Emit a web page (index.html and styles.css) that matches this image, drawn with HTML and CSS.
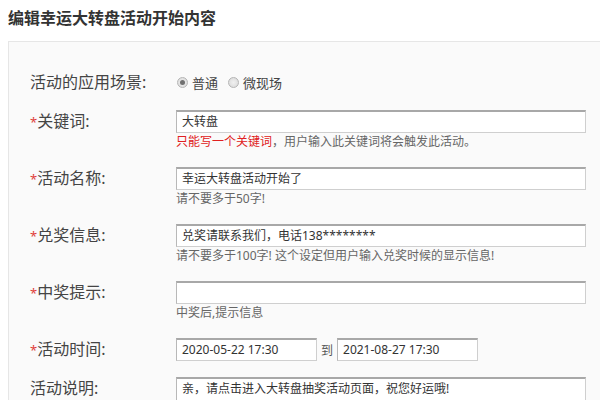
FILE: index.html
```html
<!DOCTYPE html>
<html lang="zh">
<head>
<meta charset="utf-8">
<title>编辑幸运大转盘活动开始内容</title>
<link rel="stylesheet" href="styles.css">
</head>
<body>
<h1 class="title">编辑幸运大转盘活动开始内容</h1>
<div class="panel">
  <div class="row">
    <div class="label">活动的应用场景:</div>
    <div class="field">
      <div class="radios">
        <span class="radio checked"></span><span class="radio-text">普通</span>
        <span class="radio"></span><span class="radio-text">微现场</span>
      </div>
    </div>
  </div>
  <div class="row">
    <div class="label"><span class="req">*</span>关键词:</div>
    <div class="field">
      <div class="input">大转盘</div>
      <div class="hint"><span class="warn">只能写一个关键词</span>，用户输入此关键词将会触发此活动。</div>
    </div>
  </div>
  <div class="row">
    <div class="label"><span class="req">*</span>活动名称:</div>
    <div class="field">
      <div class="input">幸运大转盘活动开始了</div>
      <div class="hint">请不要多于50字!</div>
    </div>
  </div>
  <div class="row">
    <div class="label"><span class="req">*</span>兑奖信息:</div>
    <div class="field">
      <div class="input">兑奖请联系我们，电话138********</div>
      <div class="hint">请不要多于100字! 这个设定但用户输入兑奖时候的显示信息!</div>
    </div>
  </div>
  <div class="row">
    <div class="label"><span class="req">*</span>中奖提示:</div>
    <div class="field">
      <div class="input"></div>
      <div class="hint">中奖后,提示信息</div>
    </div>
  </div>
  <div class="row">
    <div class="label"><span class="req">*</span>活动时间:</div>
    <div class="field">
      <div class="dates">
        <div class="input date">2020-05-22 17:30</div>
        <span class="to">到</span>
        <div class="input date">2021-08-27 17:30</div>
      </div>
    </div>
  </div>
  <div class="row last">
    <div class="label">活动说明:</div>
    <div class="field">
      <div class="input tall">亲，请点击进入大转盘抽奖活动页面，祝您好运哦!</div>
    </div>
  </div>
</div>
</body>
</html>
```

FILE: styles.css
```css
html, body {
  margin: 0;
  padding: 0;
  background: #fff;
  overflow: hidden;
  width: 600px;
  height: 400px;
}
body {
  font-family: "Noto Sans", "Noto Sans CJK SC", sans-serif;
  color: #333;
}
.title {
  margin: 0;
  padding: 6px 8px 0;
  font-size: 16px;
  line-height: 24px;
  font-weight: bold;
  color: #333;
}
.panel {
  margin: 11px 0 0 8px;
  width: 592px;
  height: 359px;
  background: #fafafa;
  border: 1px solid #e6e6e6;
  border-right: none;
  border-bottom: none;
  padding: 29px 0 0 21px;
  box-sizing: border-box;
  overflow: hidden;
}
.row {
  display: flex;
  margin-bottom: 16px;
}
.row.last {
  margin-bottom: 0;
}
.label {
  width: 146px;
  flex: none;
  font-size: 16px;
  line-height: 22px;
  color: #444;
}
.req {
  color: #e0403a;
  font-size: 13px;
}
.field {
  width: 410px;
}
.radios {
  display: flex;
  align-items: center;
  height: 23px;
  font-size: 13px;
  color: #444;
  padding-left: 1px;
}
.radio {
  width: 9px;
  height: 9px;
  border-radius: 50%;
  border: 1px solid #b5b5b5;
  background: radial-gradient(circle, #f0f0f0 0%, #d8d8d8 100%);
  margin-right: 4px;
  position: relative;
}
.radio.checked::after {
  content: "";
  position: absolute;
  left: 2px;
  top: 2px;
  width: 5px;
  height: 5px;
  border-radius: 50%;
  background: #707070;
}
.radio-text {
  margin-right: 10px;
}
.input {
  height: 23px;
  box-sizing: border-box;
  border: 1px solid #cfcfcf;
  border-top: 2px solid #a8a8a8;
  border-left-color: #b8b8b8;
  background: #fff;
  font-size: 12px;
  line-height: 19px;
  padding: 0 5px;
  color: #333;
  white-space: nowrap;
  overflow: hidden;
}
.input.tall {
  height: 40px;
}
.hint {
  font-size: 12px;
  line-height: 18px;
  color: #666;
}
.warn {
  color: #e02020;
}
.dates {
  display: flex;
  align-items: center;
}
.input.date {
  width: 141px;
}
.to {
  font-size: 12px;
  color: #555;
  margin: 0 4px;
}
```
